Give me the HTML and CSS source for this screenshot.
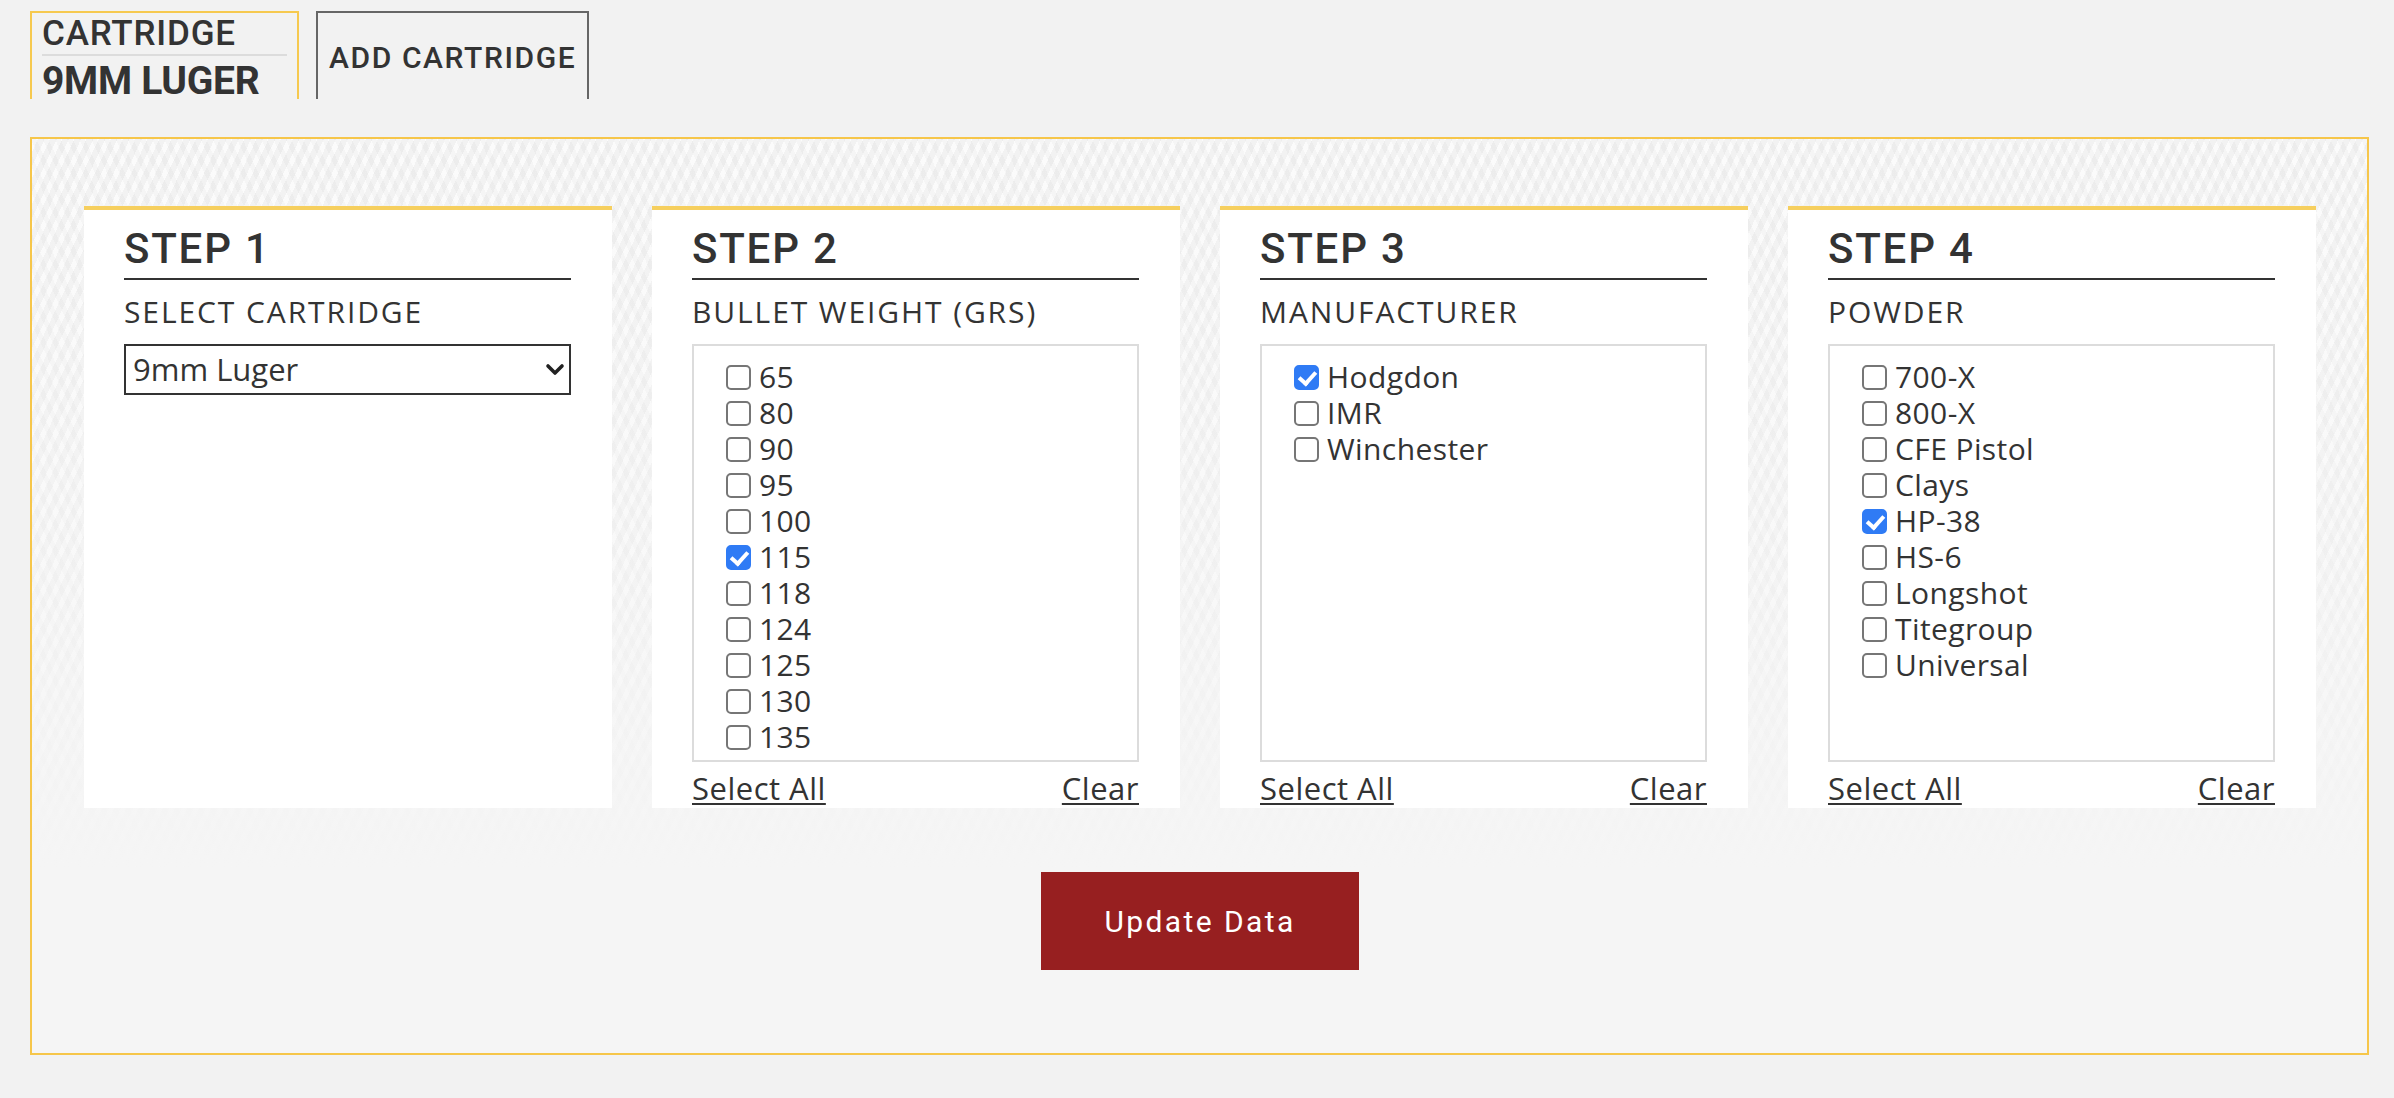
FILE: index.html
```html
<!DOCTYPE html>
<html lang="en">
<head>
<meta charset="utf-8">
<title>Load Data</title>
<link rel="stylesheet" href="styles.css">
</head>
<body>
<div class="page">
  <div class="tabs">
    <div class="tab tab-active">
      <div class="tab-label">CARTRIDGE</div>
      <div class="tab-value">9MM LUGER</div>
    </div>
    <div class="tab tab-add">ADD CARTRIDGE</div>
  </div>

  <section class="panel">
    <div class="steps">
      <div class="step">
        <h2 class="step-title">STEP 1</h2>
        <div class="step-label">SELECT CARTRIDGE</div>
        <div class="select-wrap">
          <select class="select"><option>9mm Luger</option></select>
          <svg class="chev" width="20" height="14" viewBox="0 0 20 14"><polyline points="3,3 10,10 17,3" fill="none" stroke="#222" stroke-width="3.6" stroke-linecap="round" stroke-linejoin="round"/></svg>
        </div>
      </div>

      <div class="step">
        <h2 class="step-title">STEP 2</h2>
        <div class="step-label">BULLET WEIGHT (GRS)</div>
        <div class="list-box">
          <ul class="list">
            <li><label class="item"><input class="cb" type="checkbox"><span>65</span></label></li>
            <li><label class="item"><input class="cb" type="checkbox"><span>80</span></label></li>
            <li><label class="item"><input class="cb" type="checkbox"><span>90</span></label></li>
            <li><label class="item"><input class="cb" type="checkbox"><span>95</span></label></li>
            <li><label class="item"><input class="cb" type="checkbox"><span>100</span></label></li>
            <li><label class="item"><input class="cb" type="checkbox" checked><span>115</span></label></li>
            <li><label class="item"><input class="cb" type="checkbox"><span>118</span></label></li>
            <li><label class="item"><input class="cb" type="checkbox"><span>124</span></label></li>
            <li><label class="item"><input class="cb" type="checkbox"><span>125</span></label></li>
            <li><label class="item"><input class="cb" type="checkbox"><span>130</span></label></li>
            <li><label class="item"><input class="cb" type="checkbox"><span>135</span></label></li>
            <li><label class="item"><input class="cb" type="checkbox"></label></li>
          </ul>
        </div>
        <div class="links"><a href="#" class="link">Select All</a><a href="#" class="link">Clear</a></div>
      </div>

      <div class="step">
        <h2 class="step-title">STEP 3</h2>
        <div class="step-label">MANUFACTURER</div>
        <div class="list-box">
          <ul class="list">
            <li><label class="item"><input class="cb" type="checkbox" checked><span>Hodgdon</span></label></li>
            <li><label class="item"><input class="cb" type="checkbox"><span>IMR</span></label></li>
            <li><label class="item"><input class="cb" type="checkbox"><span>Winchester</span></label></li>
          </ul>
        </div>
        <div class="links"><a href="#" class="link">Select All</a><a href="#" class="link">Clear</a></div>
      </div>

      <div class="step">
        <h2 class="step-title">STEP 4</h2>
        <div class="step-label">POWDER</div>
        <div class="list-box">
          <ul class="list">
            <li><label class="item"><input class="cb" type="checkbox"><span>700-X</span></label></li>
            <li><label class="item"><input class="cb" type="checkbox"><span>800-X</span></label></li>
            <li><label class="item"><input class="cb" type="checkbox"><span>CFE Pistol</span></label></li>
            <li><label class="item"><input class="cb" type="checkbox"><span>Clays</span></label></li>
            <li><label class="item"><input class="cb" type="checkbox" checked><span>HP-38</span></label></li>
            <li><label class="item"><input class="cb" type="checkbox"><span>HS-6</span></label></li>
            <li><label class="item"><input class="cb" type="checkbox"><span>Longshot</span></label></li>
            <li><label class="item"><input class="cb" type="checkbox"><span>Titegroup</span></label></li>
            <li><label class="item"><input class="cb" type="checkbox"><span>Universal</span></label></li>
          </ul>
        </div>
        <div class="links"><a href="#" class="link">Select All</a><a href="#" class="link">Clear</a></div>
      </div>
    </div>

    <div class="actions">
      <button class="update" type="button">Update Data</button>
    </div>
  </section>
</div>
</body>
</html>
```
FILE: styles.css
```css
* { box-sizing: border-box; }

html, body {
  margin: 0;
  padding: 0;
  background: #f2f2f2;
  color: #333;
  font-family: "Open Sans", "Noto Sans", sans-serif;
}

.page {
  padding: 11px 25px 0 30px;
}

/* ---------- tabs ---------- */
.tabs {
  display: flex;
  gap: 17px;
  align-items: flex-start;
}

.tab {
  height: 88px;
  border: 2px solid #666;
  border-bottom: none;
  font-family: Roboto, "Liberation Sans", sans-serif;
  color: #333;
}

.tab-active {
  width: 269px;
  border-color: #f6c94f;
  padding: 3px 10px 0 10px;
}

.tab-label {
  font-size: 35px;
  font-weight: 500;
  line-height: 36px;
  letter-spacing: 0.8px;
  padding-bottom: 2px;
  border-bottom: 2px solid #dcdcdc;
}

.tab-value {
  margin-top: 5px;
  font-size: 39px;
  font-weight: 700;
  line-height: 40px;
  letter-spacing: -0.3px;
}

.tab-add {
  width: 273px;
  display: flex;
  align-items: center;
  padding: 2px 0 0 11px;
  font-size: 30px;
  font-weight: 500;
  letter-spacing: 1.6px;
}

/* ---------- panel ---------- */
.panel {
  margin-top: 38px;
  border: 2px solid #f6c64a;
  padding: 67px 51px 83px 52px;
  background:
    linear-gradient(to bottom, rgba(245,245,245,0) 0%, rgba(245,245,245,0.4) 45%, #f5f5f5 80%),
    repeating-linear-gradient(65deg, rgba(0,0,0,0.022) 0 5px, rgba(0,0,0,0) 5px 11px),
    repeating-linear-gradient(-65deg, rgba(255,255,255,0.7) 0 5px, rgba(255,255,255,0) 5px 11px),
    #f2f2f2;
}

.steps {
  display: grid;
  grid-template-columns: repeat(4, 1fr);
  gap: 40px;
}

.step {
  background: #fff;
  border-top: 4px solid #f6cf5e;
  padding: 14px 41px 0 40px;
  display: flex;
  flex-direction: column;
}

.step-title {
  margin: 0;
  font-family: Roboto, "Liberation Sans", sans-serif;
  font-size: 42px;
  font-weight: 500;
  line-height: 50px;
  letter-spacing: 1.8px;
  color: #333;
  padding-bottom: 4px;
  border-bottom: 2px solid #333;
}

.step-label {
  margin: 12px 0;
  font-size: 30px;
  line-height: 40px;
  letter-spacing: 1.9px;
  color: #333;
}

/* select */
.select-wrap {
  position: relative;
}

.select {
  display: block;
  width: 100%;
  height: 51px;
  margin: 0;
  border: 2px solid #333;
  border-radius: 0;
  background: #fff;
  padding: 0 0 2px 7px;
  font-family: "Open Sans", "Noto Sans", sans-serif;
  font-size: 31px;
  color: #333;
  -webkit-appearance: none;
  appearance: none;
}

.chev {
  position: absolute;
  right: 6px;
  top: 19px;
  pointer-events: none;
}

/* checkbox list */
.list-box {
  height: 418px;
  border: 2px solid #dcdcdc;
  overflow: hidden;
  background: #fff;
}

.list {
  list-style: none;
  margin: 0;
  padding: 13px 0 0 32px;
}

.item {
  display: flex;
  align-items: center;
  gap: 8px;
  height: 36px;
  font-size: 30px;
  line-height: 36px;
  letter-spacing: 0.4px;
  color: #333;
}

.cb {
  -webkit-appearance: none;
  appearance: none;
  position: relative;
  width: 25px;
  height: 25px;
  margin: 0;
  flex: none;
  border: 2px solid #767676;
  border-radius: 5px;
  background: #fff;
}

.cb:checked {
  background: #2f7bf5;
  border-color: #2f7bf5;
}

.cb:checked::after {
  content: "";
  position: absolute;
  left: 6px;
  top: 1px;
  width: 7px;
  height: 13px;
  border-right: 4px solid #fff;
  border-bottom: 4px solid #fff;
  transform: rotate(42deg);
}

.links {
  display: flex;
  justify-content: space-between;
  padding-top: 7px;
  line-height: 39px;
}

.link {
  font-size: 31px;
  letter-spacing: 0.5px;
  color: #333;
  text-decoration: underline;
  text-decoration-thickness: 2px;
  text-underline-offset: 3px;
}

/* action */
.actions {
  display: flex;
  justify-content: center;
  margin-top: 64px;
}

.update {
  width: 318px;
  height: 98px;
  border: none;
  border-radius: 0;
  background: #971f20;
  color: #fff;
  font-family: Roboto, "Liberation Sans", sans-serif;
  font-size: 30px;
  font-weight: 400;
  letter-spacing: 2.4px;
  padding: 0;
}
```
